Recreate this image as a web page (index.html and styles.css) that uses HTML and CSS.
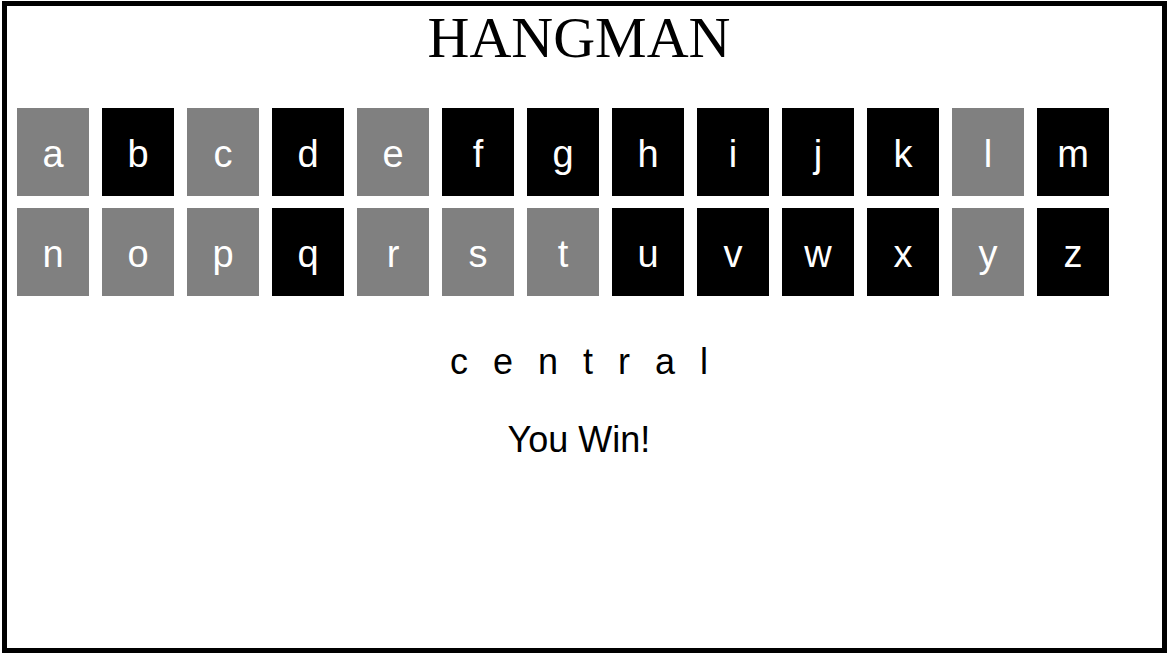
FILE: index.html
```html
<!DOCTYPE html>
<html>
<head>
<meta charset="utf-8">
<title>Hangman</title>
<link rel="stylesheet" href="styles.css">
</head>
<body>
<div class="game">
  <h1 class="title">HANGMAN</h1>
  <div class="keys">
    <div class="key used">a</div>
    <div class="key">b</div>
    <div class="key used">c</div>
    <div class="key">d</div>
    <div class="key used">e</div>
    <div class="key">f</div>
    <div class="key">g</div>
    <div class="key">h</div>
    <div class="key">i</div>
    <div class="key">j</div>
    <div class="key">k</div>
    <div class="key used">l</div>
    <div class="key">m</div>
    <div class="key used">n</div>
    <div class="key used">o</div>
    <div class="key used">p</div>
    <div class="key">q</div>
    <div class="key used">r</div>
    <div class="key used">s</div>
    <div class="key used">t</div>
    <div class="key">u</div>
    <div class="key">v</div>
    <div class="key">w</div>
    <div class="key">x</div>
    <div class="key used">y</div>
    <div class="key">z</div>
  </div>
  <div class="word">
    <span class="ch">c</span><span class="ch">e</span><span class="ch">n</span><span class="ch">t</span><span class="ch">r</span><span class="ch">a</span><span class="ch">l</span>
  </div>
  <div class="result">You Win!</div>
</div>
</body>
</html>
```

FILE: styles.css
```css
html, body {
  margin: 0;
  padding: 0;
  background: #fff;
}

.game {
  box-sizing: border-box;
  margin: 1px 2px;
  width: 1165px;
  height: 652px;
  border: 5px solid #000;
  padding: 0 21px 0 10px;
  font-family: "Liberation Sans", Arial, sans-serif;
  color: #000;
}

.title {
  margin: 0;
  font-family: "Liberation Serif", "Times New Roman", serif;
  font-weight: normal;
  font-size: 58px;
  line-height: 63px;
  text-align: center;
}

.keys {
  margin-top: 39px;
  display: flex;
  flex-wrap: wrap;
  gap: 12px 13px;
}

.key {
  box-sizing: border-box;
  width: 72px;
  height: 88px;
  padding-top: 4px;
  background: #000;
  color: #fff;
  font-size: 38px;
  display: flex;
  align-items: center;
  justify-content: center;
}

.key.used {
  background: #808080;
}

.word {
  margin-top: 46px;
  font-size: 36px;
  line-height: 40px;
  text-align: center;
}

.ch {
  margin: 0 12.5px;
}

.result {
  margin-top: 38px;
  font-size: 36px;
  line-height: 40px;
  text-align: center;
}
```
